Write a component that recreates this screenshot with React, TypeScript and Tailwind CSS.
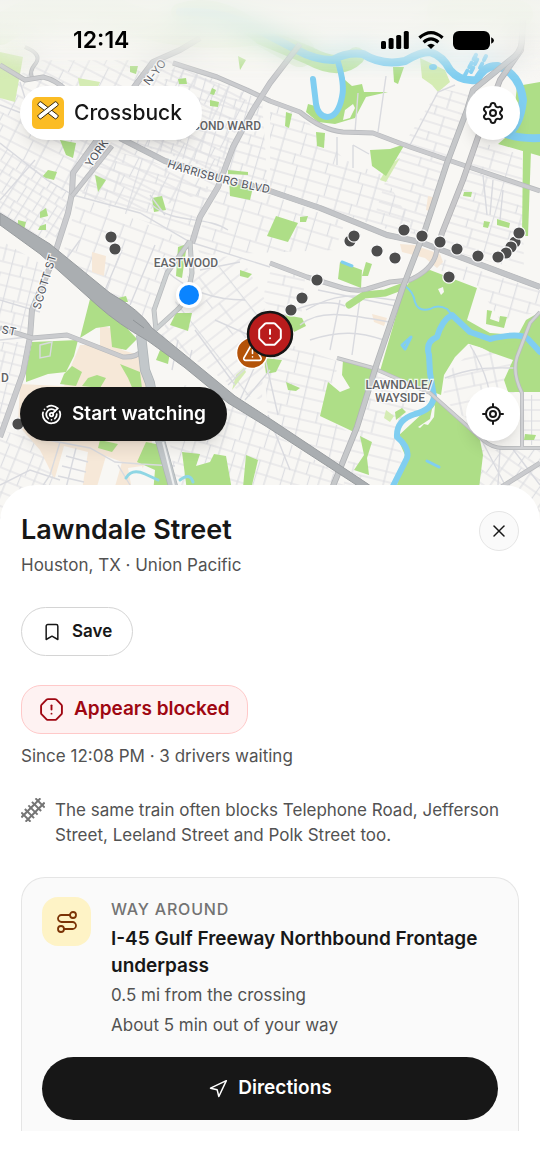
import type { ReactNode } from "react";
import {
  Bookmark,
  LocateFixed,
  Navigation,
  OctagonAlert,
  Radar,
  Route,
  Settings,
  TriangleAlert,
  X,
} from "lucide-react";

type GridProps = { id: string; area: string; angle: number; w: number; h: number };

/** A block of city streets: a rotated lattice that fills one polygon. */
function StreetGrid({ id, area, angle, w, h }: GridProps) {
  return (
    <g>
      <pattern
        id={id}
        width={w * 2}
        height={h * 3}
        patternUnits="userSpaceOnUse"
        patternTransform={`rotate(${angle})`}
      >
        <path
          d={`M0 1H${w * 2}M0 ${h}H${w * 2}M0 ${h * 2}H${w * 2}M${w * 0.3} 0V${h * 3}M${w * 1.2} 0V${h}M${w * 1.5} ${h}V${h * 3}`}
          fill="none"
          stroke="#dddee2"
          strokeWidth="1.2"
        />
      </pattern>
      <polygon points={area} fill={`url(#${id})`} />
    </g>
  );
}

const grids: GridProps[] = [
  { id: "g1", area: "40,60 170,60 250,92 215,190 140,212 60,190 0,143 0,90", angle: 27, w: 17, h: 11 },
  { id: "g2", area: "175,66 262,100 268,190 225,180 200,165 120,138", angle: 16, w: 12, h: 10 },
  { id: "g3", area: "0,143 70,195 60,240 30,235 0,214", angle: 32, w: 9, h: 9 },
  { id: "g4", area: "78,196 190,242 165,275 150,325 112,300 62,258", angle: 20, w: 21, h: 14 },
  { id: "g5", area: "150,160 215,190 192,240 80,196 110,150", angle: 17, w: 22, h: 10 },
  { id: "g6", area: "220,190 270,195 345,222 335,250 200,255 195,240", angle: 17, w: 18, h: 13 },
  { id: "g7", area: "0,240 48,268 30,310 30,335 0,325", angle: 14, w: 12, h: 12 },
  { id: "g8", area: "0,342 28,342 22,380 0,440", angle: 14, w: 12, h: 10 },
  { id: "g9", area: "0,430 40,440 60,490 70,530 0,530", angle: 22, w: 13, h: 12 },
  { id: "g10", area: "195,260 240,255 265,300 262,400 245,395 160,335", angle: -38, w: 28, h: 11 },
  { id: "g11", area: "272,266 305,278 300,330 262,300", angle: 12, w: 30, h: 10 },
  { id: "g12", area: "262,335 340,362 320,415 352,434 335,475 268,418", angle: 13, w: 19, h: 11 },
  { id: "g13", area: "270,104 300,114 345,160 385,176 420,240 270,190", angle: 16, w: 17, h: 11 },
  { id: "g14", area: "440,88 470,95 425,235 375,215 390,165", angle: 17, w: 34, h: 9 },
  { id: "g15", area: "480,142 522,155 524,270 445,250 445,232", angle: 16, w: 22, h: 9 },
  { id: "g16", area: "440,258 540,290 540,312 500,320 478,286 430,266", angle: 16, w: 19, h: 12 },
  { id: "g17", area: "450,370 480,345 510,360 515,395 500,435 455,412 443,395", angle: -12, w: 20, h: 14 },
  { id: "g18", area: "480,450 540,450 540,530 470,530", angle: 35, w: 13, h: 12 },
  { id: "g19", area: "522,395 540,395 540,445 522,445", angle: 0, w: 12, h: 10 },
  { id: "g20", area: "372,370 430,395 425,408 398,424 395,440 403,455 390,530 335,530 352,440", angle: 14, w: 30, h: 11 },
  { id: "g21", area: "185,385 228,402 330,470 360,500 370,530 180,530 165,400", angle: 17, w: 13, h: 13 },
];

const parks = [
  "413,276 430,270 477,288 467,320 490,333 518,335 526,320 540,312 540,392 508,392 504,380 513,360 490,352 470,342 455,357 444,375 441,395 380,371 403,292",
  "433,395 455,416 480,440 483,455 474,530 385,530 405,455 397,437 424,412",
  "343,360 373,369 354,432 320,416 328,382 340,392 350,388 342,375",
  "340,262 362,270 361,288 338,279",
  "340,62 345,80 352,86 362,84 364,92 388,92 366,97 355,118 335,124 318,122 306,112 308,104 315,106 328,119 342,104",
  "517,86 540,82 540,156 498,144 512,132",
  "370,150 390,149 405,144 386,176 372,166",
  "276,216 298,223 288,242 267,236",
  "229,178 254,183 250,200 230,196",
  "90,299 118,310 124,325 137,339 126,350 112,347 110,326 96,328 80,338",
  "32,342 78,340 74,356 66,372 48,374 26,382 26,370",
  "176,313 192,313 188,331 170,325",
  "178,247 187,244 182,278 176,276",
  "60,140 76,143 73,158 66,155",
  "48,170 57,172 54,180 42,177",
  "95,175 106,180 98,192",
  "393,67 404,67 398,84 394,82",
  "146,442 166,446 176,530 150,530 155,470 137,462",
  "182,452 200,454 196,466 210,462 214,454 226,456 232,490 228,530 192,530",
  "246,455 258,460 252,485 262,530 240,520",
  "120,364 140,372 143,396 134,392 128,378",
  "97,375 106,378 100,388 82,386 88,378",
  "72,366 82,372 76,386 60,384 64,374",
  "100,440 118,444 112,452 98,448",
  "160,350 170,352 168,364 156,360",
  "487,310 492,311 490,319 499,322 500,316 507,317 504,328 486,324",
  "523,150 531,150 528,236 522,236",
  "360,436 372,442 367,458 369,475 354,470 364,455",
  "316,132 325,133 324,148 317,146",
  "286,112 292,114 289,128 285,126",
  "238,56 246,60 240,70",
  "212,88 216,90 214,95 210,94",
  "210,100 219,102 218,107 210,106",
  "178,79 186,78 187,84 179,84",
  "130,66 138,66 136,74 130,72",
  "228,170 248,172 248,175 228,174",
  "152,198 162,196 166,210 154,212",
  "40,212 46,208 48,216 40,218",
  "18,220 26,222 24,230 18,226",
  "40,226 46,224 46,230 38,230",
  "240,270 252,274 248,278 240,276",
  "285,315 302,318 306,326 294,332",
  "264,358 282,360 276,372 266,374",
  "286,382 300,388 296,391 288,390",
  "464,192 472,192 471,197 463,196",
  "497,219 510,223 509,228 497,225",
  "484,221 490,222 488,228 483,227",
  "300,217 308,216 306,222 300,222",
  "362,276 366,262 372,264 368,276",
  "395,412 402,408 406,412 396,420",
  "525,434 536,435 534,440 524,440",
  "118,298 126,296 128,302 120,302",
];

const paleParks = [
  "0,52 23,57 15,102 0,98",
  "420,58 445,70 450,82 438,92 432,85 422,78",
  "78,78 100,82 96,92 80,88",
  "386,410 394,416 390,422 384,418",
  "388,166 400,158 386,182 380,180",
  "236,375 244,368 246,372 232,390",
];

const campus = [
  "80,345 100,345 100,325 117,330 122,350 142,356 150,386 145,400 60,405 66,378",
  "18,425 20,384 60,386 150,386 152,446 140,475 160,530 60,530 60,490 40,450",
  "372,314 387,318 384,326 374,322",
  "400,244 414,245 440,254 443,262 437,268 425,258 402,252",
  "92,252 106,256 104,276 92,272",
  "428,196 436,198 432,212 426,210",
];

const campusBlocks = [
  "64,446 88,452 82,490 52,488",
  "106,456 122,462 114,490 96,490",
  "128,468 142,466 150,490 132,490",
];

type RoadProps = { d: string; w: number; color?: string; edge?: string };

const minor = [
  "M0 143L47 180L73 195L140 213L190 242L270 267",
  "M353 145V168M337 137V165M369 154L353 145M358 93L355 132M386 76L378 132",
  "M455 85L438 92L410 145M483 175L487 215M503 190L500 220M493 180L490 215",
  "M165 270C190 292 215 300 245 300M200 270L240 262M195 330L235 385M215 320L260 340M262 345L278 415",
  "M240 400L262 350M245 400L270 370M228 385L265 350M268 415L290 470",
  "M306 310C340 290 360 296 395 300M300 325C320 308 350 315 390 322M340 300L330 350M360 298L352 355",
  "M262 330C300 300 330 300 345 306M310 340C340 330 360 332 384 340M318 290L395 306",
  "M152 205C175 225 205 215 228 230M150 195L165 215",
  "M48 440L90 448L115 462L140 464M60 442L50 475L20 520M118 465L130 485M140 464L175 466",
  "M66 456L88 462M62 466L86 472M58 476L84 482M76 448L66 488M40 345L52 342L50 356L40 358Z",
  "M445 378C475 366 495 368 515 368M470 345C485 370 495 395 490 430M480 437L505 485M500 448L498 485M512 448L540 485",
  "M0 300L40 312M64 262L80 240M103 295L122 250M130 305L155 245M0 485L30 470L60 480",
  "M0 105L40 120L90 138M20 82L35 130M60 85L48 140M0 200L35 160M0 340L28 337M178 340L172 370M192 350L188 366",
];

const roads: RoadProps[] = [
  { d: "M25 47Q42 54 36 63Q28 72 33 79", w: 3 },
  { d: "M0 65L25 80L43 77Q56 80 66 90L120 138L165 161L270 191L320 208L387 235L420 242L540 287", w: 4, color: "#cccdd0" },
  { d: "M120 138L165 161L270 191L320 208L387 235L420 242L540 287", w: 5, color: "#c3c5c8" },
  { d: "M173 63L217 77L247 90L270 101L300 112Q322 130 343 132L373 133L410 147L457 163L540 191", w: 4 },
  { d: "M200 38L180 50L153 62L137 83L97 140L73 173L72 193L68 213L57 247L50 267L32 310L30 337L23 373L0 437", w: 5 },
  { d: "M112 146L72 196", w: 4 },
  { d: "M300 44L270 83L253 110L233 147L218 187L200 217L192 243", w: 5 },
  { d: "M190 241L167 273L154 310L156 330M190 241L192 273Q187 302 177 310L155 330", w: 4, color: "#ccd0d1" },
  { d: "M0 328L32 338L67 335L123 357Q136 358 143 350", w: 4 },
  { d: "M270 263L307 277L343 288Q358 292 367 289L390 282L410 280Q436 268 437 248", w: 4 },
  { d: "M337 358L373 368L430 393L457 417L483 440Q492 448 503 448H540", w: 3, color: "#d0d1d3" },
  { d: "M540 312L530 323L517 357Q512 373 522 393V447", w: 3, color: "#d2d3d6" },
  { d: "M540 463L503 486L470 520", w: 4 },
  { d: "M523 20L521 50L500 80L478 137L463 180L442 233L437 250", w: 5, color: "#c8c8ca", edge: "#b0b0b3" },
  { d: "M523 20L522 42Q520 54 510 60L473 90L467 110L447 163L425 230L403 287L377 363L357 427L333 486L318 530", w: 5, color: "#c6c8ca", edge: "#b0b2b5" },
  { d: "M141 335L145 370L150 383L160 440L173 486L185 530", w: 9, color: "#c2c7ca", edge: "#adb3b6" },
];

const dots = [
  [111, 237], [115, 249], [350, 241], [354, 236], [377, 251], [395, 258], [404, 230], [422, 236],
  [440, 242], [457, 249], [478, 256], [515, 242], [511, 247], [506, 253], [498, 257], [519, 233],
  [449, 277], [317, 280], [302, 298], [291, 310], [18, 424],
];

function Road({ d, w, color = "#cacbce", edge = "#b8babd" }: RoadProps) {
  return (
    <g fill="none" strokeLinejoin="round">
      <path d={d} stroke={edge} strokeWidth={w + 1} />
      <path d={d} stroke={color} strokeWidth={w - 0.5} />
    </g>
  );
}

function CityMap() {
  return (
    <svg
      viewBox="0 0 540 530"
      preserveAspectRatio="xMidYMin slice"
      className="absolute inset-0 h-full w-full"
      role="img"
      aria-label="Map of railroad crossings near Eastwood, Houston"
    >
      <rect width="540" height="530" fill="#f8f7f4" />
      {grids.map((g) => (
        <StreetGrid key={g.id} {...g} />
      ))}
      <g fill="#f6e8d8">
        {campus.map((p) => (
          <polygon key={p} points={p} />
        ))}
      </g>
      <g fill="#f8f7f4">
        {campusBlocks.map((p) => (
          <polygon key={p} points={p} />
        ))}
      </g>
      <g fill="#d5ecb4">
        {paleParks.map((p) => (
          <polygon key={p} points={p} />
        ))}
      </g>
      <g fill="#aede87">
        {parks.map((p) => (
          <polygon key={p} points={p} />
        ))}
      </g>
      <g fill="none" stroke="#d9dadf" strokeWidth="1.4">
        {minor.map((d) => (
          <path key={d} d={d} />
        ))}
      </g>
      <g fill="none" stroke="#aede87" strokeLinecap="round">
        <path d="M349 305L364 295L385 293L404 286" strokeWidth="7" />
        <path d="M0 30Q60 -10 120 15T260 30L300 52" strokeWidth="30" opacity=".2" />
        <path d="M180 12Q220 0 262 36L310 56Q340 72 356 56" strokeWidth="18" opacity=".7" />
        <path d="M440 10Q480 0 520 14" strokeWidth="26" opacity=".25" />
        <path d="M463 338L500 349L515 345" strokeWidth="8" />
      </g>
      <g fill="#f8f7f4">
        <path d="M418 427l12-8 2-10 3-4-1 12-6 8-4-1-4 4zM438 289l5-2 1 5-3 3zM345 110l8-6 2 4-5 10-7 2z" />
      </g>
      <g fill="none" stroke="#80cef1" strokeLinecap="round" strokeLinejoin="round">
        <path d="M180 12Q230 10 270 36L297 50Q315 60 333 60Q346 52 363 54Q382 66 405 61Q420 52 430 52Q443 56 450 70Q460 82 477 80Q484 65 498 66Q520 74 523 100Q520 128 506 134Q520 139 540 138" strokeWidth="8" />
        <path d="M338 62Q345 85 342 97Q338 117 327 117Q318 116 316 104L313 79" strokeWidth="6" />
        <path d="M465 75l12-22M471 72l8-16M480 68l6-12" strokeWidth="4" strokeDasharray="5 4" />
        <path d="M405 286Q413 291 415 302Q418 312 430 309Q438 304 447 309L452 315" strokeWidth="2" />
        <path d="M540 352L528 339Q520 332 490 339L470 332L452 315Q442 320 437 337Q425 342 429 355L430 373L434 397Q432 410 415 414Q396 420 397 437Q410 448 407 458L393 486L388 530" strokeWidth="6" />
        <path d="M126 478Q132 468 145 474L158 480M180 480Q190 472 193 482" strokeWidth="3" stroke="#8fd6e4" />
        <path d="M402 345l9-8-6 12zM427 461l12 6M342 262l10 4" strokeWidth="3" />
      </g>
      <ellipse cx="433" cy="67" rx="4" ry="3" fill="#80cef1" />
      {roads.map((r) => (
        <Road key={r.d} {...r} />
      ))}
      <path
        d="M0 213L50 244L110 293Q140 310 152 328L190 359L235 396L272 420L368 484L430 530H416L358 486L267 427L228 403L184 367L148 341Q118 324 98 306L40 254L0 225Z"
        fill="#aaaeb1"
        stroke="#989c9f"
      />
      <path d="M133 320L144 328" stroke="#8f9497" fill="none" />
      <path d="M163 442L174 486" stroke="#eef0f0" strokeWidth="2" />

      <g
        fontFamily='Roboto, "Liberation Sans", sans-serif'
        fontSize="12"
        fontWeight="500"
        fill="#626365"
        stroke="#ffffff"
        strokeWidth="2.5"
        strokeOpacity=".85"
        paintOrder="stroke"
      >
        <text x="261" y="130" textAnchor="end">SECOND WARD</text>
        <text x="186" y="267" textAnchor="middle">EASTWOOD</text>
        <text x="399" y="389" textAnchor="middle">LAWNDALE/</text>
        <text x="400" y="402" textAnchor="middle">WAYSIDE</text>
        <text x="1" y="382">D</text>
      </g>
      <path id="harrisburg" d="M167 167Q215 184 290 197" fill="none" />
      <g
        fontFamily='Inter, "Liberation Sans", sans-serif'
        fontSize="11"
        fill="#50535b"
        stroke="#ffffff"
        strokeWidth="2.5"
        strokeOpacity=".8"
        paintOrder="stroke"
        className="tracking-wide"
      >
        <text>
          <textPath href="#harrisburg">HARRISBURG BLVD</textPath>
        </text>
        <text transform="translate(91 168) rotate(-55)">YORK</text>
        <text transform="translate(149 86) rotate(-52)">N-YO</text>
        <text transform="translate(40 310) rotate(-73)">SCOTT ST</text>
        <text transform="translate(1 333) rotate(12)">ST</text>
      </g>

      <g fill="#4d4d4d" stroke="#ffffff" strokeWidth="1.2">
        {dots.map(([x, y]) => (
          <circle key={`${x}-${y}`} cx={x} cy={y} r="6.2" />
        ))}
      </g>
      <circle cx="189" cy="295" r="13" fill="#fff" className="drop-shadow-md" />
      <circle cx="189" cy="295" r="10" fill="#0a84ff" />
      <circle cx="252" cy="353" r="15.5" fill="#b45309" stroke="#fff" strokeWidth="1.5" />
      <TriangleAlert x="242" y="342" width="21" height="21" color="#fff" strokeWidth={1.8} />
      <circle cx="270" cy="334" r="22" fill="#b91c1c" stroke="#161616" strokeWidth="2.5" />
      <OctagonAlert x="257" y="321" width="26" height="26" color="#fff" strokeWidth={1.8} />
    </svg>
  );
}

function StatusBar() {
  return (
    <div className="relative flex h-[86px] items-start justify-between pt-[26px] pr-[46px] pl-[73px]">
      <span className="text-[23px] leading-7 font-semibold text-black">12:14</span>
      <div className="flex h-7 items-center gap-[9px]">
        <svg viewBox="0 0 28 18" className="h-[18px] w-7" aria-hidden="true">
          <rect x="0" y="10" width="5" height="8" rx="1.6" />
          <rect x="7.6" y="7" width="5" height="11" rx="1.6" />
          <rect x="15.2" y="4" width="5" height="14" rx="1.6" />
          <rect x="22.8" y="0" width="5" height="18" rx="1.6" />
        </svg>
        <svg viewBox="0 0 26 18" className="h-[18px] w-[26px]" aria-hidden="true">
          <g fill="none" stroke="#000" strokeWidth="3.2">
            <path d="M1.4 6.8Q13-3.4 24.6 6.8" />
            <path d="M5.6 11.2Q13 4.6 20.4 11.2" />
          </g>
          <path d="M13 18L9.2 14.2Q13 11.2 16.8 14.2Z" />
        </svg>
        <svg viewBox="0 0 41 19" className="h-[19px] w-[41px]" aria-hidden="true">
          <rect width="37" height="19" rx="6" />
          <path d="M38.2 6.3Q41 7.6 41 9.5T38.2 12.7Z" />
        </svg>
      </div>
    </div>
  );
}

function CrossbuckLogo() {
  return (
    <svg viewBox="0 0 32 32" className="size-8" aria-hidden="true">
      <rect width="32" height="32" rx="5" fill="#fbbc24" />
      <g fill="#fff" stroke="#33270d" strokeWidth="0.9">
        <rect x="4.2" y="11" width="23.6" height="4.6" rx="1.2" transform="rotate(38 16 13.3)" />
        <rect x="4.2" y="11" width="23.6" height="4.6" rx="1.2" transform="rotate(-38 16 13.3)" />
      </g>
    </svg>
  );
}

function RailIcon() {
  return (
    <svg viewBox="0 0 24 24" className="size-6 shrink-0" aria-hidden="true">
      <g transform="rotate(-45 12 12)" stroke="#757575" strokeWidth="2" fill="none">
        <path d="M-1.5 9H25.5M-1.5 15H25.5" />
        <path d="M2 5.5V18.5M7 5.5V18.5M12 5.5V18.5M17 5.5V18.5M22 5.5V18.5" />
      </g>
    </svg>
  );
}

function RoundButton({ label, children }: { label: string; children: ReactNode }) {
  return (
    <button
      type="button"
      aria-label={label}
      className="flex size-[54px] items-center justify-center rounded-full bg-white text-neutral-900 shadow-lg"
    >
      {children}
    </button>
  );
}

export default function App() {
  return (
    <main className="min-h-screen bg-white font-[Inter,'Liberation_Sans',sans-serif] text-neutral-900 antialiased">
      <section className="relative overflow-hidden pb-20">
        <CityMap />
        <div className="absolute inset-x-0 top-0 h-20 bg-gradient-to-b from-[#f3f4ef]/90 via-[#f3f4ef]/60 to-transparent backdrop-blur-md [mask-image:linear-gradient(to_bottom,black_40%,transparent)]" />
        <StatusBar />
        <div className="relative flex flex-col gap-[247px] px-5">
          <div className="flex items-center justify-between">
            <div className="flex h-[54px] items-center gap-[10px] rounded-full bg-white pr-5 pl-3 shadow-lg">
              <CrossbuckLogo />
              <span className="text-[21px] leading-7 font-medium">Crossbuck</span>
            </div>
            <RoundButton label="Settings">
              <Settings size={24} />
            </RoundButton>
          </div>
          <div className="flex items-center justify-between">
            <button
              type="button"
              className="flex h-[54px] items-center gap-[10px] rounded-full bg-neutral-900 px-[21px] text-[19px] font-semibold text-white shadow-lg"
            >
              <Radar size={21} />
              Start watching
            </button>
            <RoundButton label="Center on my location">
              <LocateFixed size={24} />
            </RoundButton>
          </div>
        </div>
      </section>

      <section className="relative -mt-9 rounded-t-[36px] bg-white px-[21px] pt-[26px] pb-9">
        <header className="flex items-start justify-between">
          <div>
            <h1 className="text-[27px] leading-[38px] font-semibold">Lawndale Street</h1>
            <p className="mt-1 text-[17px] leading-6 text-neutral-600">Houston, TX · Union Pacific</p>
          </div>
          <button
            type="button"
            aria-label="Close"
            className="flex size-10 items-center justify-center rounded-full border border-neutral-200 bg-neutral-50"
          >
            <X size={20} strokeWidth={1.8} />
          </button>
        </header>

        <button
          type="button"
          className="mt-[30px] flex h-[49px] items-center gap-[10px] rounded-full border border-neutral-300 px-5 text-[17px] font-semibold"
        >
          <Bookmark size={20} strokeWidth={1.8} />
          Save
        </button>

        <div className="mt-[29px] flex h-[49px] w-fit items-center gap-[10px] rounded-[20px] border border-red-200 bg-red-50 px-[17px] text-[19px] font-semibold text-red-800">
          <OctagonAlert size={25} strokeWidth={1.8} />
          Appears blocked
        </div>
        <p className="mt-[10px] text-[17px] leading-6 text-neutral-600">Since 12:08 PM · 3 drivers waiting</p>

        <div className="mt-[30px] flex items-start gap-[10px]">
          <RailIcon />
          <p className="text-[17px] leading-[25px] text-neutral-600">
            The same train often blocks Telephone Road, Jefferson Street, Leeland Street and Polk Street too.
          </p>
        </div>

        <article className="mt-[29px] rounded-t-3xl border border-b-0 border-neutral-200 bg-neutral-50 px-5 pt-[19px] pb-[11px]">
          <div className="flex items-start gap-5">
            <div className="flex size-[49px] shrink-0 items-center justify-center rounded-2xl bg-amber-100 text-amber-900">
              <Route size={24} strokeWidth={1.8} />
            </div>
            <div>
              <p className="text-base leading-6 font-medium tracking-wider text-neutral-500">WAY AROUND</p>
              <h2 className="mt-1 text-[19px] leading-[27px] font-semibold">
                I-45 Gulf Freeway Northbound Frontage underpass
              </h2>
              <p className="mt-1 text-[17px] leading-6 text-neutral-600">0.5 mi from the crossing</p>
              <p className="mt-[6px] text-[17px] leading-6 text-neutral-600">About 5 min out of your way</p>
            </div>
          </div>
          <button
            type="button"
            className="mt-5 flex h-[63px] w-full items-center justify-center gap-[10px] rounded-full bg-neutral-900 text-[19px] font-semibold text-white"
          >
            <Navigation size={20} strokeWidth={1.8} />
            Directions
          </button>
        </article>
      </section>
    </main>
  );
}
